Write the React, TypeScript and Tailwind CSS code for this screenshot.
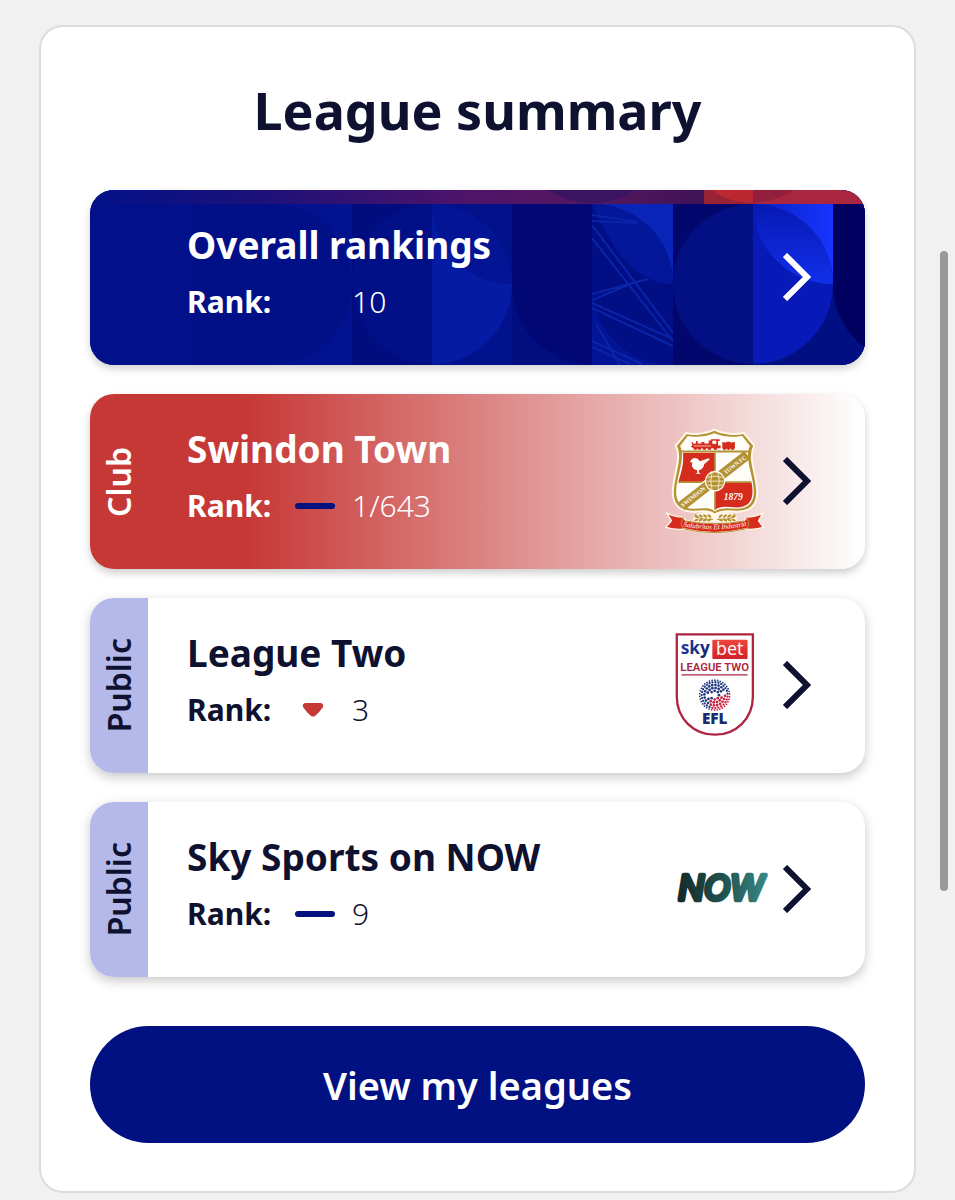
import { ReactNode } from 'react';

type Movement = 'none' | 'same' | 'down';

interface League {
  name: string;
  rank: string;
  movement: Movement;
  variant: 'overall' | 'club' | 'public';
  label?: string;
  logo?: ReactNode;
}

// Halftone dots of the EFL ball, ring by ring
const ballRings = [
  { radius: 13, count: 8, r: 4 },
  { radius: 22, count: 14, r: 4.2 },
  { radius: 31, count: 20, r: 4 },
  { radius: 39, count: 27, r: 3.5 },
  { radius: 45, count: 34, r: 2.6 },
];

const ballDots = ballRings.flatMap(({ radius, count, r }, ring) =>
  Array.from({ length: count }, (_, i) => {
    const angle = (i / count) * Math.PI * 2 + ring * 0.35;
    const x = radius * Math.cos(angle);
    const y = radius * Math.sin(angle);
    const gap = radius < 35 && Math.abs(y + x * 0.35 - 2 - Math.sin(x / 10) * 8) < 4;
    return { x, y, r, gap, red: x > -12 && y > 8 - x * 0.3 };
  }).filter((dot) => !dot.gap),
);

function SwindonCrest() {
  return (
    <svg viewBox="30 20 300 325" className="w-[100px] h-[108px]" role="img" aria-label="Swindon Town FC">
      <defs>
        <clipPath id="crest-field">
          <path d="M84 97H274V122C278 156 294 182 293 216C292 246 276 262 244 262C218 261 196 256 180 270C164 256 142 261 116 262C84 262 68 246 67 216C66 182 82 156 84 122Z" />
        </clipPath>
        <path id="crest-ribbon-text" d="M80 318Q178 338 280 316" />
      </defs>
      <path
        d="M178 28C151 42 111 43 94 38L62 76C82 112 54 164 53 216C53 254 76 275 116 275C142 274 164 270 180 284Q196 270 244 275C284 275 307 254 307 216C306 164 278 112 298 76L266 38C244 43 205 42 178 28Z"
        fill="#b39135"
        stroke="#fff8e8"
        strokeWidth="6"
      />
      <path
        d="M178 39C151 51 116 51 98 47L75 77C93 113 64 164 63 216C63 248 82 266 116 266C142 265 164 260 180 274Q196 260 244 266C278 266 297 248 297 216C296 164 267 113 285 77L262 47C240 51 205 51 178 39Z"
        fill="#fffdf8"
      />
      <g clipPath="url(#crest-field)">
        <path d="M60 97H180V186H60Z" fill="#d62c1d" />
        <path d="M180 186H300V290H180Z" fill="#d62c1d" />
        <path d="M180 97V286M60 186H300" stroke="#b39135" strokeWidth="5" />
        <path d="M61 272L286 97" stroke="#fffdf8" strokeWidth="37" />
      </g>
      <path d="M79 258L277 104" stroke="#b39135" strokeWidth="30" />
      <path d="M79 94H280" stroke="#b39135" strokeWidth="6" />
      {/* locomotive and tender */}
      <g fill="#d62c1d">
        <path d="M109 65H113V70H123V62H128V70H139V65H148V70H161V61H168V57H194V62H189V76H197V84H115L107 79L112 75Z" />
        <path d="M202 65L211 67L220 64L229 67L240 65V84H202Z" />
        {[121, 133, 148, 163, 181, 209, 221, 233].map((cx) => (
          <circle key={cx} cx={cx} cy="83" r="6" />
        ))}
      </g>
      <path d="M173 62H183V70H173ZM116 77H168" stroke="#fffdf8" strokeWidth="2" fill="#fffdf8" />
      {/* robin */}
      <path
        d="M104 125L110 117C118 111 128 113 134 123L161 114L164 118L147 132C146 144 138 149 131 150L132 157L138 161H120L127 158L126 150C112 147 108 138 112 127Z"
        fill="#fffdf8"
      />
      {/* ball */}
      <circle cx="180" cy="183" r="31" fill="#fffdf8" />
      <circle cx="180" cy="183" r="27" fill="#b39135" />
      <path
        d="M157 172Q180 164 203 172M155 183H205M157 194Q180 202 203 194M171 159Q163 183 171 207M189 159Q197 183 189 207"
        stroke="#f3e5b6"
        strokeWidth="3"
        fill="none"
      />
      <g fontFamily="'Liberation Serif', serif" fontWeight="700" fill="#fffdf8">
        <text transform="translate(83 262) rotate(-38)" fontSize="18">SWINDON</text>
        <text transform="translate(212 163) rotate(-38)" fontSize="17">TOWN FC</text>
        <text x="206" y="239" fontSize="29" fontStyle="italic">1879</text>
      </g>
      {/* laurel */}
      <path d="M116 284Q156 268 180 284Q204 268 244 284L246 306H114Z" fill="#fff8e8" />
      <path d="M118 290Q145 300 174 298M242 290Q215 300 186 298" stroke="#b39135" strokeWidth="3" fill="none" />
      {[124, 137, 150, 163, 197, 210, 223, 236].map((cx) => (
        <g key={cx} fill="#b39135">
          <ellipse cx={cx} cy="288" rx="7" ry="3.5" transform={`rotate(${cx < 180 ? 35 : -35} ${cx} 288)`} />
          <ellipse cx={cx} cy="300" rx="7" ry="3.5" transform={`rotate(${cx < 180 ? -25 : 25} ${cx} 300)`} />
        </g>
      ))}
      {/* motto ribbon */}
      <path
        d="M35 279Q59 291 84 291L92 302Q180 319 268 302L276 291Q300 291 324 279L311 302L325 322Q296 330 272 327Q180 349 88 327Q62 330 32 322L49 302Z"
        fill="#d62c1d"
        stroke="#fff8e8"
        strokeWidth="4"
      />
      <path d="M84 291L78 312L84 327M276 291L282 312L276 327" stroke="#b39135" strokeWidth="3" fill="none" />
      <path d="M92 303Q180 319 268 303M88 327Q180 349 272 327" stroke="#b39135" strokeWidth="3" fill="none" />
      <text fontFamily="'Liberation Serif', serif" fontStyle="italic" fontWeight="400" fontSize="21" fill="#fffdf8" textAnchor="middle">
        <textPath href="#crest-ribbon-text" startOffset="50%">Salubritas Et Industria</textPath>
      </text>
    </svg>
  );
}

function LeagueTwoBadge() {
  return (
    <svg viewBox="30 20 300 325" className="w-[100px] h-[108px]" role="img" aria-label="Sky Bet League Two EFL">
      <path
        d="M65 30H294V217C294 285 242 332 180 332C117 332 65 285 65 217Z"
        fill="#fff"
        stroke="#ad2540"
        strokeWidth="7"
      />
      <defs>
        <linearGradient id="sky-blue" x1="0" y1="0" x2="1" y2="1">
          <stop offset="0" stopColor="#1b4bb0" />
          <stop offset="1" stopColor="#15195f" />
        </linearGradient>
        <linearGradient id="bet-red" x1="0" y1="0" x2="0" y2="1">
          <stop offset="0" stopColor="#f0453c" />
          <stop offset="1" stopColor="#d3202a" />
        </linearGradient>
      </defs>
      <rect x="172" y="46" width="106" height="58" rx="3" fill="url(#bet-red)" />
      <g fontFamily="'Open Sans', sans-serif">
        <text x="77" y="90" fontSize="52" fontWeight="700" fill="url(#sky-blue)">sky</text>
        <text x="183" y="91" fontSize="54" fill="#fff">bet</text>
      </g>
      <text x="179" y="141" fontFamily="Roboto, sans-serif" fontWeight="600" fontSize="34" fill="#ad2540" textAnchor="middle">
        LEAGUE TWO
      </text>
      <path d="M79 152H278" stroke="#ad2540" strokeWidth="4" />
      <g transform="translate(179 213)">
        {ballDots.map((dot) => (
          <circle key={`${dot.x}:${dot.y}`} cx={dot.x} cy={dot.y} r={dot.r} fill={dot.red ? '#c81f3e' : '#233a80'} />
        ))}
      </g>
      <text x="179" y="301" fontFamily="'Open Sans', sans-serif" fontWeight="800" fontSize="46" fill="#1b2a68" textAnchor="middle">
        EFL
      </text>
    </svg>
  );
}

function NowLogo() {
  return (
    <svg viewBox="15 -74 300 325" className="w-[100px] h-[108px] overflow-visible" role="img" aria-label="NOW">
      <defs>
        <linearGradient id="now-fill" x1="0" y1="0" x2="1" y2="0">
          <stop offset="0" stopColor="#142b2a" />
          <stop offset="0.5" stopColor="#20504e" />
          <stop offset="1" stopColor="#3a8783" />
        </linearGradient>
      </defs>
      <text
        x="183"
        y="122"
        fontFamily="Inter, sans-serif"
        fontWeight="400"
        fontStyle="italic"
        fontSize="103"
        fill="url(#now-fill)"
        stroke="url(#now-fill)"
        strokeWidth="14"
        strokeLinejoin="round"
        textAnchor="middle"
      >
        NOW
      </text>
    </svg>
  );
}

function BannerPattern() {
  return (
    <svg
      viewBox="0 0 775 175"
      preserveAspectRatio="xMaxYMid slice"
      className="absolute inset-0 w-full h-full"
      aria-hidden="true"
    >
      <defs>
        <linearGradient id="strip" x1="0" y1="0" x2="1" y2="0">
          <stop offset="0" stopColor="#03118a" />
          <stop offset="0.22" stopColor="#1c1179" />
          <stop offset="0.5" stopColor="#501468" />
          <stop offset="0.65" stopColor="#54185f" />
          <stop offset="0.79" stopColor="#401258" />
        </linearGradient>
        <linearGradient id="bright" x1="0" y1="0" x2="1" y2="0">
          <stop offset="0" stopColor="#0a20c0" />
          <stop offset="1" stopColor="#1635ff" />
        </linearGradient>
        <linearGradient id="leaf" x1="0" y1="0" x2="0" y2="1">
          <stop offset="0" stopColor="#0719b4" />
          <stop offset="1" stopColor="#1130ea" />
        </linearGradient>
        <clipPath id="tile-a"><path d="M342 14H422V175H342Z" /></clipPath>
        <clipPath id="tile-b"><path d="M422 14H502V175H422Z" /></clipPath>
        <clipPath id="tile-c"><path d="M502 14H583V175H502Z" /></clipPath>
        <clipPath id="tile-d"><path d="M663 14H743V175H663Z" /></clipPath>
        <clipPath id="tile-e"><path d="M743 14H775V175H743Z" /></clipPath>
        <clipPath id="disc-a"><circle cx="342" cy="94" r="80" /></clipPath>
        <clipPath id="disc-d"><circle cx="663" cy="94" r="80" /></clipPath>
        <clipPath id="top-strip"><path d="M0 0H775V14H0Z" /></clipPath>
      </defs>
      <path d="M0 0H775V175H0Z" fill="#02108a" />
      <path d="M101 14H182V175H101Z" fill="#020f86" />
      <path d="M182 14H262V175H182Z" fill="#03138f" />
      <circle cx="182" cy="94" r="80" fill="#021088" />
      <path d="M262 14H342V175H262Z" fill="#010c7f" />
      <circle cx="342" cy="94" r="80" fill="#021087" />
      <g clipPath="url(#tile-a)">
        <path d="M342 14H422V175H342Z" fill="#02128c" />
        <path d="M342 14A80 80 0 0 1 422 94V14Z" fill="#02118a" />
        <circle cx="342" cy="94" r="80" fill="#051ba4" />
        <g clipPath="url(#disc-a)">
          <circle cx="422" cy="14" r="80" fill="#031594" />
        </g>
      </g>
      <g clipPath="url(#tile-b)">
        <path d="M422 14H502V175H422Z" fill="#020d80" />
        <path d="M422 14H583V94A80 80 0 0 1 422 94Z" fill="#010876" />
      </g>
      <g clipPath="url(#tile-c)">
        <path d="M502 14H583V175H502Z" fill="#020e84" />
        <path d="M502 14A80 80 0 0 1 583 94V14Z" fill="#0825b8" />
        <path d="M502 14A80 80 0 0 1 583 94Q535 94 502 14Z" fill="#04169a" />
        <path d="M502 94A80 80 0 0 0 583 175H502Z" fill="#031496" />
        <g stroke="#0a25aa" strokeWidth="2" fill="none">
          <path d="M502 25L548 32M502 31L545 33M502 35L583 143M502 48L583 151M502 104L558 89M502 110L543 93M502 113L583 149M502 118L583 156M502 151L552 174M502 157L540 174M506 134L530 175" />
        </g>
      </g>
      <path d="M583 14H663V175H583Z" fill="#01076d" />
      <path d="M663 14A80 80 0 0 0 663 174Z" fill="#021083" />
      <g clipPath="url(#tile-d)">
        <path d="M663 14H743V175H663Z" fill="#010f83" />
        <circle cx="663" cy="94" r="80" fill="#0719b7" />
        <path d="M663 14A80 80 0 0 1 743 94V14Z" fill="url(#bright)" />
        <g clipPath="url(#disc-d)">
          <path d="M663 14A80 80 0 0 0 743 94V14Z" fill="url(#leaf)" />
        </g>
      </g>
      <g clipPath="url(#tile-e)">
        <path d="M743 14H775V175H743Z" fill="#010f83" />
        <path d="M743 14H903V94A80 80 0 0 1 743 94Z" fill="#000060" />
      </g>
      <g clipPath="url(#top-strip)">
        <path d="M0 0H775V14H0Z" fill="url(#strip)" />
        <circle cx="502" cy="-67" r="80" fill="#3b1462" />
        <path d="M614 0H663V14H614Z" fill="#bb2831" />
        <path d="M663 0H775V14H663Z" fill="#a92640" />
        <path d="M614 0H622Q636 12 663 13V14H614Z" fill="#982236" />
        <path d="M663 0H704Q688 11 663 13Z" fill="#921f3e" />
      </g>
    </svg>
  );
}

function MovementIcon({ movement }: { movement: Movement }) {
  return (
    <span className="flex w-10 shrink-0 items-center justify-center">
      {movement === 'same' && <span className="h-[6px] w-full rounded-full bg-[#04127f]" />}
      {movement === 'down' && (
        <svg viewBox="0 0 22 14" className="mr-1 h-[14px] w-[22px]" role="img" aria-label="Down">
          <path
            d="M3 0H19Q22 1 21 4Q17 10 13 13Q11 14 9 13Q5 10 1 4Q0 1 3 0Z"
            fill="#c53a37"
          />
        </svg>
      )}
    </span>
  );
}

const cardStyles = {
  overall: 'bg-[#02108a] text-white shadow-[0_4px_8px_rgba(0,0,0,0.18)]',
  club: 'bg-linear-to-r/srgb from-[#c63836] from-20% to-white text-white shadow-[0_4px_8px_rgba(0,0,0,0.2)]',
  public: 'bg-white text-[#0f1130] shadow-[0_4px_12px_rgba(0,0,0,0.22)]',
};

const tabStyles = {
  overall: '',
  club: 'text-white',
  public: 'bg-[#b5b9ea] text-[#0f1130]',
};

function LeagueCard({ league }: { league: League }) {
  return (
    <a href="#league" className={`relative flex h-[175px] overflow-hidden rounded-3xl ${cardStyles[league.variant]}`}>
      {league.variant === 'overall' && <BannerPattern />}
      <div className={`flex w-[58px] shrink-0 items-center justify-center ${tabStyles[league.variant]}`}>
        <span className="rotate-180 text-[32px] leading-10 font-semibold [writing-mode:vertical-rl]">
          {league.label}
        </span>
      </div>
      <div className="relative flex grow items-center pr-[54px] pb-[2px] pl-[39px]">
        <div className="grow pb-[10px]">
          <h2 className="text-[37px] leading-12 font-bold">{league.name}</h2>
          <p className="mt-[13px] flex items-center text-[30px] leading-10">
            <span className="w-[108px] font-bold">Rank:</span>
            <MovementIcon movement={league.movement} />
            <span className="ml-[17px] font-[350]">{league.rank}</span>
          </p>
        </div>
        {league.logo}
        <svg
          viewBox="0 0 28 48"
          className={`ml-[18px] h-12 w-7 shrink-0 ${league.variant === 'overall' ? 'text-white' : 'text-[#0f1130]'}`}
          aria-hidden="true"
        >
          <path d="M2 2L24 24L2 46" fill="none" stroke="currentColor" strokeWidth="6" />
        </svg>
      </div>
    </a>
  );
}

const leagues: League[] = [
  { name: 'Overall rankings', rank: '10', movement: 'none', variant: 'overall' },
  { name: 'Swindon Town', rank: '1/643', movement: 'same', variant: 'club', label: 'Club', logo: <SwindonCrest /> },
  { name: 'League Two', rank: '3', movement: 'down', variant: 'public', label: 'Public', logo: <LeagueTwoBadge /> },
  { name: 'Sky Sports on NOW', rank: '9', movement: 'same', variant: 'public', label: 'Public', logo: <NowLogo /> },
];

export default function App() {
  return (
    <main className="relative min-h-screen bg-[#f1f1f1] px-[39px] pt-[25px] pb-2 font-['Noto_Sans','Open_Sans',sans-serif]">
      <section className="rounded-3xl border-2 border-[#dcdcdc] bg-white px-[49px] pt-[51px] pb-12">
        <h1 className="text-center text-[52px] leading-16 font-bold text-[#0f1130]">League summary</h1>
        <div className="mt-12 flex flex-col gap-[29px]">
          {leagues.map((league) => (
            <LeagueCard key={league.name} league={league} />
          ))}
        </div>
        <button
          type="button"
          className="mt-[49px] h-[117px] w-full rounded-full bg-[#021182] pt-[2px] text-[38px] font-semibold text-white"
        >
          View my leagues
        </button>
      </section>
      {/* scroll indicator */}
      <div className="absolute top-[251px] right-[7px] h-[640px] w-2 rounded-full bg-[#999999]" />
    </main>
  );
}
